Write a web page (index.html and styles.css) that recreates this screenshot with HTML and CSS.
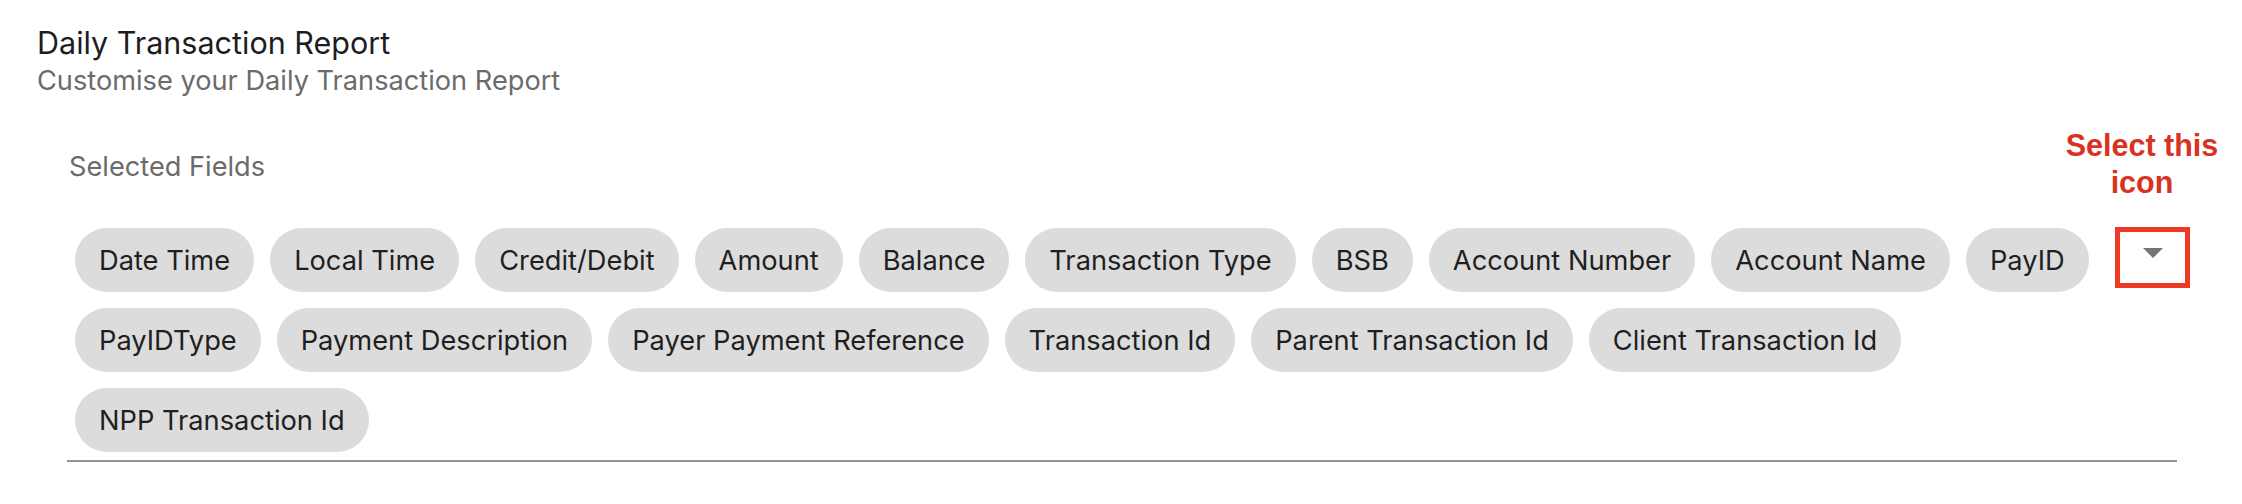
FILE: index.html
```html
<!DOCTYPE html>
<html lang="en">
<head>
<meta charset="utf-8">
<title>Daily Transaction Report</title>
<link rel="stylesheet" href="styles.css">
</head>
<body>
<div class="page">
  <header class="head">
    <h1 class="title">Daily Transaction Report</h1>
    <p class="subtitle">Customise your Daily Transaction Report</p>
  </header>
  <section class="field">
    <label class="label">Selected Fields</label>
    <div class="input">
      <div class="chips">
        <span class="chip">Date Time</span>
        <span class="chip">Local Time</span>
        <span class="chip">Credit/Debit</span>
        <span class="chip">Amount</span>
        <span class="chip">Balance</span>
        <span class="chip">Transaction Type</span>
        <span class="chip">BSB</span>
        <span class="chip">Account Number</span>
        <span class="chip">Account Name</span>
        <span class="chip">PayID</span>
        <span class="chip">PayIDType</span>
        <span class="chip">Payment Description</span>
        <span class="chip">Payer Payment Reference</span>
        <span class="chip">Transaction Id</span>
        <span class="chip">Parent Transaction Id</span>
        <span class="chip">Client Transaction Id</span>
        <span class="chip">NPP Transaction Id</span>
      </div>
      <button class="popup" type="button" aria-label="Open">
        <svg viewBox="0 0 24 24" width="48" height="48"><path d="M7 10l5 5 5-5z" fill="#757575"/></svg>
      </button>
      <div class="note">Select this<br>icon</div>
      <div class="highlight"></div>
    </div>
  </section>
</div>
</body>
</html>
```
FILE: styles.css
```css
html, body {
  margin: 0;
  padding: 0;
  background: #ffffff;
}

.page {
  padding: 24px 0 0 37px;
  font-family: Inter, "Noto Sans", sans-serif;
}

.title {
  margin: 0;
  font-size: 30.5px;
  line-height: 38px;
  font-weight: 400;
  color: #1d1d1f;
}

.subtitle {
  margin: 2px 0 0 0;
  font-size: 27.2px;
  line-height: 34px;
  color: #6b6b6b;
}

.field {
  margin: 52px 0 0 30px;
  width: 2110px;
}

.label {
  display: block;
  font-size: 27.2px;
  line-height: 34px;
  color: #6b6b6b;
  padding-left: 2px;
}

.input {
  position: relative;
  margin-top: 36px;
  border-bottom: 2px solid #949494;
  padding-right: 60px;
}

.chips {
  display: flex;
  flex-wrap: wrap;
}

.chip {
  display: inline-flex;
  align-items: center;
  height: 64px;
  margin: 8px;
  padding: 0 24px;
  border-radius: 32px;
  background: #dcdcdc;
  color: #1f1f1f;
  font-size: 27.25px;
  white-space: nowrap;
}

.popup {
  position: absolute;
  top: 8px;
  right: 0;
  width: 48px;
  height: 48px;
  padding: 0;
  border: 0;
  background: transparent;
}

.popup svg {
  display: block;
}

.highlight {
  position: absolute;
  left: 2048px;
  top: 7px;
  width: 65px;
  height: 51px;
  border: 5px solid #ee3a24;
}

.note {
  position: absolute;
  left: 1985px;
  top: -93px;
  width: 180px;
  text-align: center;
  font-family: "Liberation Sans", Arial, sans-serif;
  font-weight: 700;
  font-size: 30.5px;
  line-height: 37px;
  color: #d9321f;
}
```
